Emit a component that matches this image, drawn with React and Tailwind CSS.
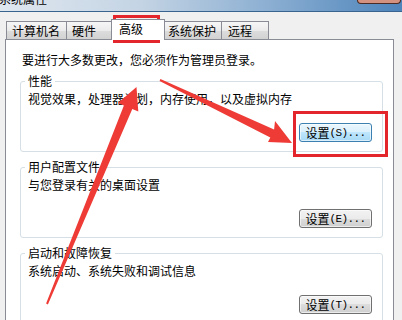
import React from 'react';

const tabs = [
  { label: '计算机名', w: 'w-[61px]', pl: 'pl-[5px]' },
  { label: '硬件', w: 'w-[46px]', pl: 'pl-[5px]' },
  { label: '高级', w: 'w-[54px]', pl: 'pl-[7px]', active: true },
  { label: '系统保护', w: 'w-[58px]', pl: 'pl-[3px]' },
  { label: '远程', w: 'w-[48px]', pl: 'pl-[6px]' },
];

const groups = [
  { title: '性能', desc: '视觉效果，处理器计划，内存使用，以及虚拟内存', key: 'S', focused: true },
  { title: '用户配置文件', desc: '与您登录有关的桌面设置', key: 'E' },
  { title: '启动和故障恢复', desc: '系统启动、系统失败和调试信息', key: 'T' },
];

const SettingsButton = ({ hotkey, focused }) => (
  <button
    className={
      focused
        ? 'flex h-[19px] w-[73px] items-center justify-center rounded-[3px] border border-[#3c7fb1] bg-[linear-gradient(to_bottom,#eaf6fd_0%,#d9f0fc_50%,#bee6fd_50%,#a7d9f5_100%)] shadow-[inset_0_0_0_1px_rgba(255,255,255,0.6)]'
        : 'flex h-[19px] w-[73px] items-center justify-center rounded-[3px] border border-[#707070] bg-[linear-gradient(to_bottom,#f2f2f2_0%,#ebebeb_50%,#dddddd_50%,#cfcfcf_100%)] shadow-[inset_0_0_0_1px_rgba(255,255,255,0.6)]'
    }
  >
    <span className="text-[12px] leading-[12px]">设置</span>
    <span className="font-['Liberation_Mono',monospace] text-[11px] leading-[12px] tracking-[-0.6px]">({hotkey})...</span>
  </button>
);

export default function App() {
  return (
    <div className="relative h-[320px] w-[402px] overflow-hidden bg-[#f0f0f0] font-['Noto_Sans_CJK_SC',sans-serif] text-[12px] leading-[12px] text-black">
      {/* window title bar, mostly cut off */}
      <div className="flex h-[12px] items-start justify-between overflow-hidden border-b border-[#39648f] bg-[linear-gradient(to_right,#dfe7ef_0%,#c4d4e4_35%,#8fb1d3_65%,#4d84bb_100%)]">
        <span className="-ml-[1px] -mt-[7px] leading-[12px]">系统属性</span>
        <div className="mr-[1px] h-[4px] w-[44px] rounded-b-[4px] border-x border-b border-[#4b2b25] bg-[#d3917f]" />
      </div>

      <div className="pl-[5px] pr-[8px] pt-[9px]">
        {/* tabs */}
        <div className="flex h-[18px] items-end pl-[1px]">
          {tabs.map((t, i) =>
            t.active ? (
              <div
                key={t.label}
                className={`relative z-10 -mb-px -ml-px flex h-[21px] items-start border-x border-t border-[#898c95] bg-white pt-[3px] ${t.w} ${t.pl}`}
              >
                {t.label}
              </div>
            ) : (
              <div
                key={t.label}
                className={`flex h-[18px] items-center border-x border-t border-[#898c95] bg-[linear-gradient(to_bottom,#f6f6f6_0%,#ebebeb_50%,#dddddd_50%,#d2d2d2_100%)] ${i > 0 ? '-ml-px' : ''} ${t.w} ${t.pl}`}
              >
                {t.label}
              </div>
            )
          )}
        </div>

        {/* tab page */}
        <div className="h-[300px] w-[389px] border border-[#898c95] bg-white pt-[14px]">
          <p className="pl-[16px]">要进行大多数更改，您必须作为管理员登录。</p>

          <div className="ml-[14px] mt-[9px] flex w-[363px] flex-col gap-[9px]">
            {groups.map((g) => (
              <fieldset key={g.title} className="rounded-[3px] border border-[#d5dfe5] pb-[9px] pl-[7px] pr-[10px]">
                <legend className="-ml-[3px] px-[3px] leading-[12px]">{g.title}</legend>
                <p className="mt-[6px]">{g.desc}</p>
                <div className="mt-[18px] flex justify-end">
                  <SettingsButton hotkey={g.key} focused={g.focused} />
                </div>
              </fieldset>
            ))}
          </div>
        </div>
      </div>

      {/* annotation: red boxes */}
      <div className="pointer-events-none absolute left-[113px] top-[15px] h-[28px] w-[47px] border-[3px] border-[#e3262c]" />
      <div className="pointer-events-none absolute left-[293px] top-[111px] h-[46px] w-[95px] border-[3px] border-[#e3262c]" />

      {/* annotation: arrows */}
      <svg className="pointer-events-none absolute left-0 top-0" width="402" height="320" viewBox="0 0 402 320">
        <polygon
          fill="#ef3b36"
          points="136.5,87 138.3,111.5 132.3,109 47.9,304.4 46.1,303.6 123.9,105.6 117.9,103.1"
        />
        <polygon
          fill="#ef3b36"
          points="292,143 268,142 270.3,137.6 159.6,80.9 160.4,79.1 274.1,129.4 275,121"
        />
      </svg>
    </div>
  );
}
